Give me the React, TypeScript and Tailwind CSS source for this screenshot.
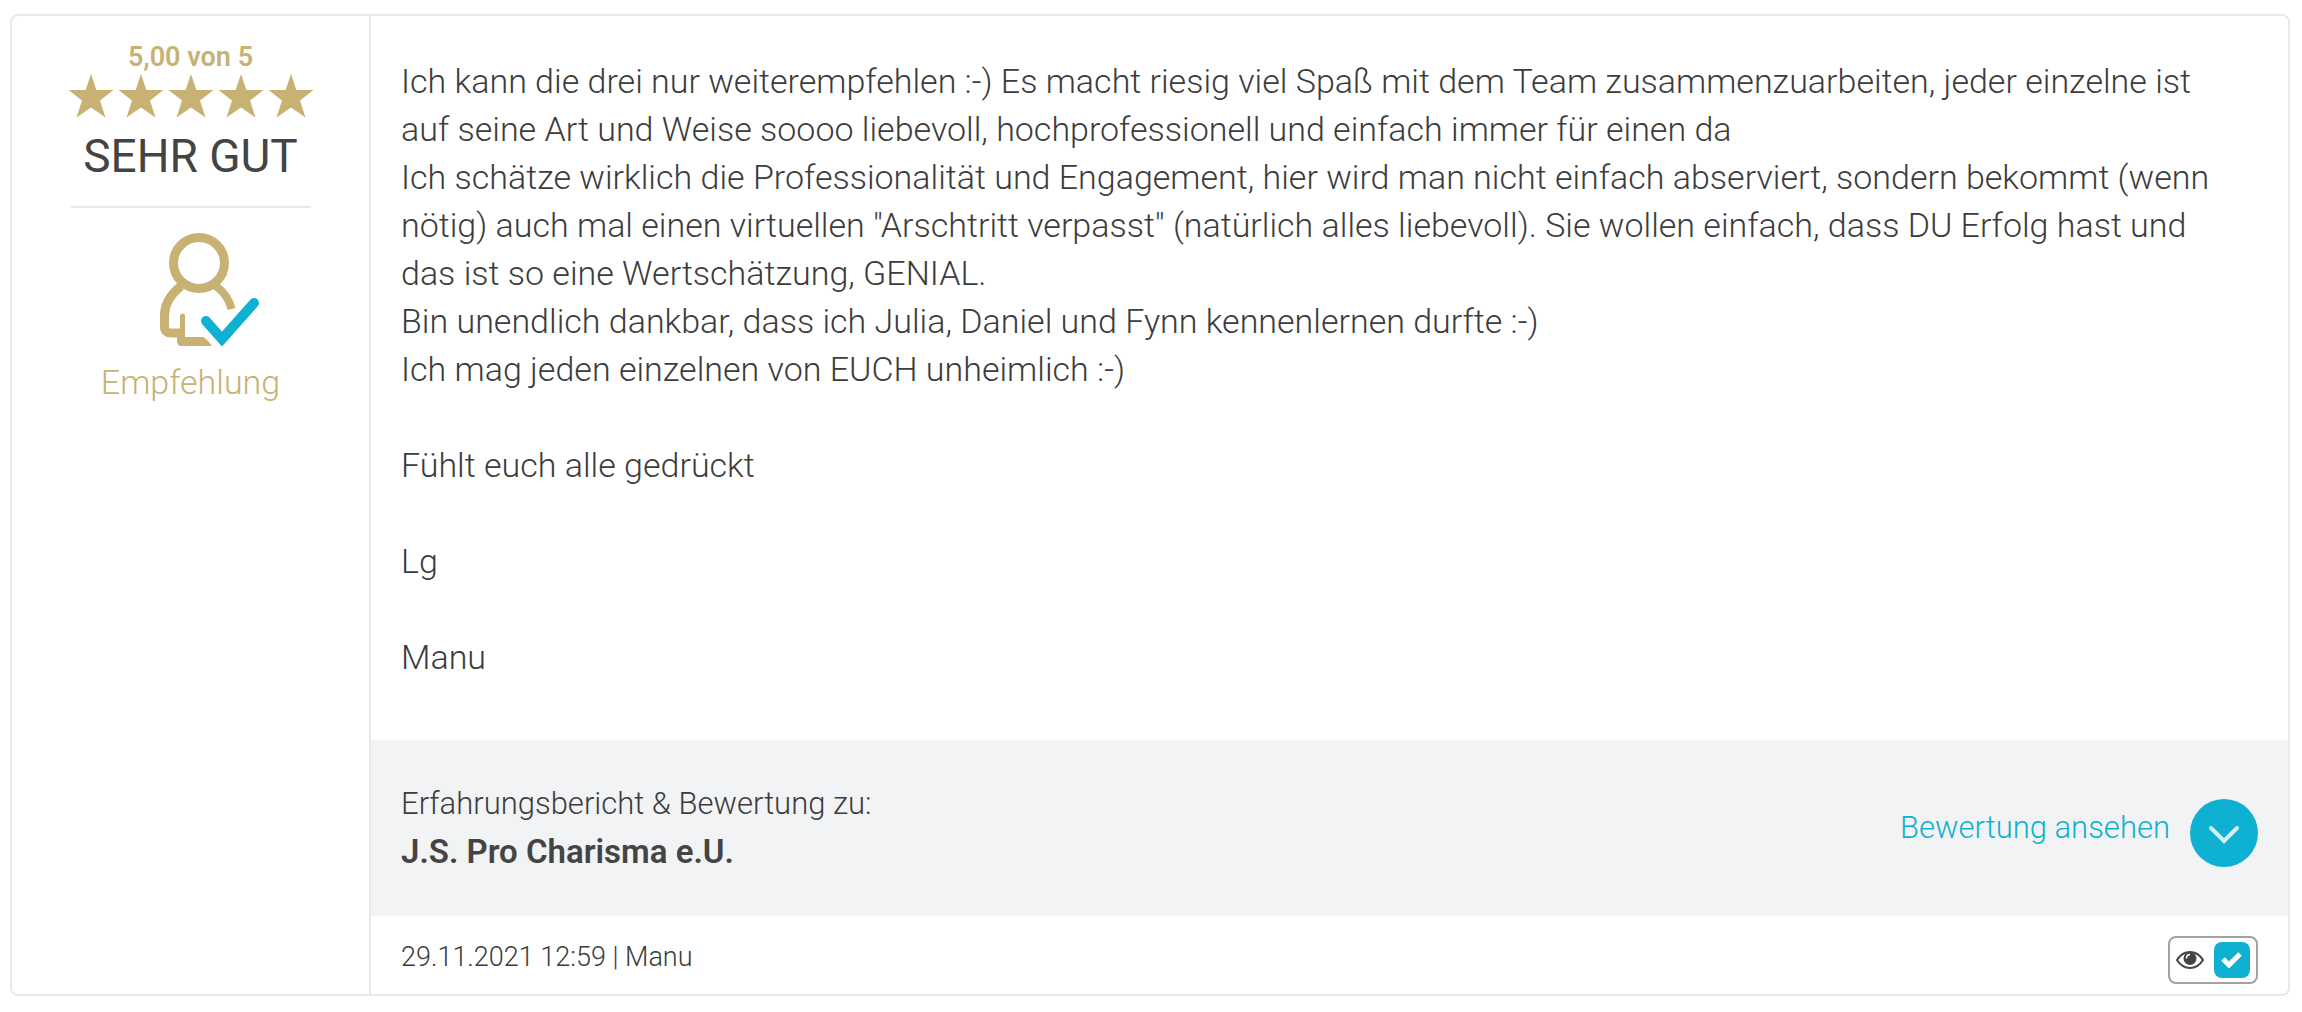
import React from "react";

const review = `Ich kann die drei nur weiterempfehlen :-) Es macht riesig viel Spaß mit dem Team zusammenzuarbeiten, jeder einzelne ist auf seine Art und Weise soooo liebevoll, hochprofessionell und einfach immer für einen da
Ich schätze wirklich die Professionalität und Engagement, hier wird man nicht einfach abserviert, sondern bekommt (wenn nötig) auch mal einen virtuellen "Arschtritt verpasst" (natürlich alles liebevoll). Sie wollen einfach, dass DU Erfolg hast und das ist so eine Wertschätzung, GENIAL.
Bin unendlich dankbar, dass ich Julia, Daniel und Fynn kennenlernen durfte :-)
Ich mag jeden einzelnen von EUCH unheimlich :-)

Fühlt euch alle gedrückt

Lg

Manu`;

function Star() {
  return (
    <svg viewBox="0 0 46 44" className="h-11 w-[46px]" fill="#c8b273" aria-hidden="true">
      <path d="M23 0L28.400 16H45.500L32 26.600L37.500 43.500L23 33.400L8.500 43.500L14 26.600L0.500 16H17.600Z" />
    </svg>
  );
}

function RecommendIcon() {
  return (
    <svg viewBox="0 0 100 114" className="h-[114px] w-[100px]" fill="none" aria-hidden="true">
      <g stroke="#c8b273">
        <circle cx="39" cy="31" r="25.500" strokeWidth="9" />
        <path d="M21 54C10 63 4.500 72 4.500 83V95Q4.500 101 11 101H22" strokeWidth="9" />
        <path d="M56 54C64 60 69 66 71.500 77" strokeWidth="8" />
        <path d="M22.500 84V105" strokeWidth="5" strokeLinecap="round" />
      </g>
      <path d="M17 99H25V105H43Q47 107 52 114H20Q17 113 17 109Z" fill="#c8b273" />
      <path d="M46 89L62 107L94 71" stroke="#0eb1d2" strokeWidth="10" strokeLinecap="round" />
    </svg>
  );
}

function EyeIcon() {
  return (
    <svg viewBox="0 0 28 20" className="h-5 w-7" fill="none" aria-hidden="true">
      <path d="M1 10Q6 2 14 2T27 10Q22 18 14 18T1 10Z" stroke="#444" strokeWidth="2" />
      <circle cx="14" cy="8.500" r="6.500" fill="#444" />
      <path d="M10.500 8Q10.500 5 13.500 4.500" stroke="#fff" strokeWidth="1.500" strokeLinecap="round" />
    </svg>
  );
}

export default function App() {
  return (
    <main className="bg-white pt-3.5 pr-3 pb-4 pl-2.5 font-[Roboto,sans-serif] font-light text-[#3c3c3c]">
      <article className="flex overflow-hidden rounded-lg border-2 border-[#e8e8e8]">
        <aside className="flex w-[359px] shrink-0 flex-col items-center border-r-2 border-[#e8e8e8] pt-6">
          <p className="text-[27px] leading-[34px] font-semibold text-[#c8b273]">5,00 von 5</p>
          <div className="flex gap-1" role="img" aria-label="5 von 5 Sternen">
            <Star />
            <Star />
            <Star />
            <Star />
            <Star />
          </div>
          <p className="mt-2 text-[46px] leading-[60px] font-normal text-[#444]">SEHR GUT</p>
          <hr className="mt-5 w-60 border-t-2 border-[#e8e8e8]" />
          <div className="mt-6 flex flex-col items-center text-[#c8b273]">
            <div className="pl-[38px]">
              <RecommendIcon />
            </div>
            <p className="mt-3 text-[34px] leading-[48px]">Empfehlung</p>
          </div>
        </aside>
        <div className="min-w-0 flex-1">
          <p className="pt-[41px] pr-[50px] pb-[59px] pl-[30px] text-[34px] leading-[48px] whitespace-pre-line">{review}</p>
          <section className="flex items-center justify-between bg-[#f2f3f5] px-[30px] py-10">
            <div>
              <p className="text-[31px] leading-[48px]">Erfahrungsbericht &amp; Bewertung zu:</p>
              <p className="text-[33px] leading-[48px] font-semibold text-[#444]">J.S. Pro Charisma e.U.</p>
            </div>
            <a href="#bewertung" className="flex items-center gap-5 text-[31px] leading-[48px] text-[#0eb1d2]">
              Bewertung ansehen
              <svg viewBox="0 0 68 68" className="mt-2.5 size-[68px]" aria-hidden="true">
                <circle cx="34" cy="34" r="34" fill="#0eb1d2" />
                <path d="M21 29L34 42L47 29" fill="none" stroke="#d5f1f7" strokeWidth="4" strokeLinecap="round" />
              </svg>
            </a>
          </section>
          <footer className="flex items-start justify-between px-[30px] pt-5 pb-2.5">
            <p className="text-[27px] leading-[42px]">29.11.2021 12:59 | Manu</p>
            <label className="flex h-12 items-center gap-2.5 rounded-lg border-2 border-[#a2a2a2] px-1.5">
              <EyeIcon />
              <span className="grid size-9">
                <input
                  type="checkbox"
                  defaultChecked
                  aria-label="Bewertung sichtbar"
                  className="col-start-1 row-start-1 size-9 appearance-none rounded-lg bg-[#0eb1d2]"
                />
                <svg viewBox="0 0 36 36" className="pointer-events-none col-start-1 row-start-1 size-9" fill="none" aria-hidden="true">
                  <path d="M9 17L15 23L26 12" stroke="#fff" strokeWidth="5" />
                </svg>
              </span>
            </label>
          </footer>
        </div>
      </article>
    </main>
  );
}
